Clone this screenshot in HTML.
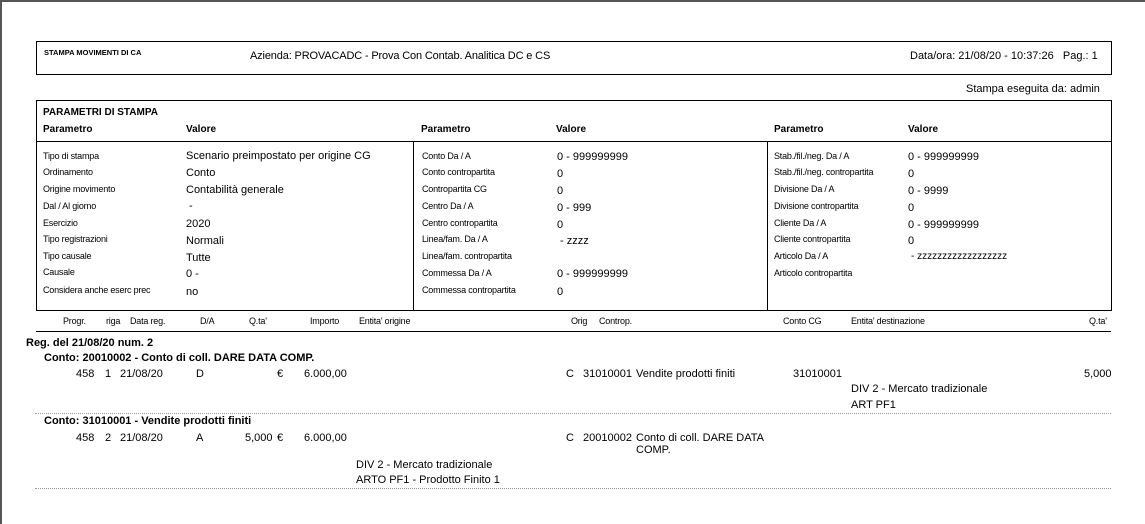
<!DOCTYPE html>
<html><head><meta charset="utf-8"><style>
html,body{margin:0;padding:0}
body{width:1145px;height:524px;position:relative;overflow:hidden;background:#fff;font-family:"Liberation Sans",sans-serif;color:#000;border-left:2px solid #555;border-top:2px solid #555;box-sizing:border-box}
div,span{position:absolute;white-space:nowrap}
.s{font-size:9px;letter-spacing:-0.2px}
.v{font-size:11px}
.b{font-weight:bold;font-size:10px}
.bx{border:1px solid #000}
.dot{border-top:1px dotted #999;height:0}
</style></head><body>
<div class="bx" style="left:34px;top:39px;width:1074px;height:32px"></div>
<span class="b" style="left:42px;top:46px;font-size:7.5px">STAMPA MOVIMENTI DI CA</span>
<span class="v" style="left:248px;top:48px;letter-spacing:-0.15px">Azienda: PROVACADC - Prova Con Contab. Analitica DC e CS</span>
<span class="v" style="left:908px;top:48px">Data/ora: 21/08/20 - 10:37:26&nbsp;&nbsp;&nbsp;Pag.: 1</span>
<span class="v" style="left:964px;top:81px">Stampa eseguita da: admin</span>

<div class="bx" style="left:34px;top:98px;width:1074px;height:209px"></div>
<div style="left:34px;top:139px;width:1075px;height:1px;background:#000"></div>
<div style="left:411px;top:139px;width:1px;height:169px;background:#000"></div>
<div style="left:765px;top:139px;width:1px;height:169px;background:#000"></div>
<span class="b" style="left:41px;top:105px">PARAMETRI DI STAMPA</span>
<span class="b" style="left:41px;top:122px">Parametro</span>
<span class="b" style="left:184px;top:122px">Valore</span>
<span class="b" style="left:419px;top:122px">Parametro</span>
<span class="b" style="left:554px;top:122px">Valore</span>
<span class="b" style="left:772px;top:122px">Parametro</span>
<span class="b" style="left:906px;top:122px">Valore</span>

<span class="s" style="left:41px;top:149px">Tipo di stampa</span><span class="v" style="left:184px;top:148px">Scenario preimpostato per origine CG</span>
<span class="s" style="left:41px;top:165px">Ordinamento</span><span class="v" style="left:184px;top:165px">Conto</span>
<span class="s" style="left:41px;top:182px">Origine movimento</span><span class="v" style="left:184px;top:182px">Contabilità generale</span>
<span class="s" style="left:41px;top:199px">Dal / Al giorno</span><span class="v" style="left:187px;top:198px">-</span>
<span class="s" style="left:41px;top:216px">Esercizio</span><span class="v" style="left:184px;top:216px">2020</span>
<span class="s" style="left:41px;top:232px">Tipo registrazioni</span><span class="v" style="left:184px;top:233px">Normali</span>
<span class="s" style="left:41px;top:249px">Tipo causale</span><span class="v" style="left:184px;top:250px">Tutte</span>
<span class="s" style="left:41px;top:265px">Causale</span><span class="v" style="left:184px;top:266px">0 -</span>
<span class="s" style="left:41px;top:283px">Considera anche eserc prec</span><span class="v" style="left:184px;top:284px">no</span>

<span class="s" style="left:420px;top:149px">Conto Da / A</span><span class="v" style="left:555px;top:149px">0 - 999999999</span>
<span class="s" style="left:420px;top:165px">Conto contropartita</span><span class="v" style="left:555px;top:166px">0</span>
<span class="s" style="left:420px;top:182px">Contropartita CG</span><span class="v" style="left:555px;top:183px">0</span>
<span class="s" style="left:420px;top:199px">Centro Da / A</span><span class="v" style="left:555px;top:200px">0 - 999</span>
<span class="s" style="left:420px;top:216px">Centro contropartita</span><span class="v" style="left:555px;top:217px">0</span>
<span class="s" style="left:420px;top:232px">Linea/fam. Da / A</span><span class="v" style="left:558px;top:233px">- zzzz</span>
<span class="s" style="left:420px;top:249px">Linea/fam. contropartita</span>
<span class="s" style="left:420px;top:266px">Commessa Da / A</span><span class="v" style="left:555px;top:266px">0 - 999999999</span>
<span class="s" style="left:420px;top:283px">Commessa contropartita</span><span class="v" style="left:555px;top:284px">0</span>

<span class="s" style="left:772px;top:149px">Stab./fil./neg. Da / A</span><span class="v" style="left:906px;top:149px">0 - 999999999</span>
<span class="s" style="left:772px;top:165px">Stab./fil./neg. contropartita</span><span class="v" style="left:906px;top:166px">0</span>
<span class="s" style="left:772px;top:182px">Divisione Da / A</span><span class="v" style="left:906px;top:183px">0 - 9999</span>
<span class="s" style="left:772px;top:199px">Divisione contropartita</span><span class="v" style="left:906px;top:200px">0</span>
<span class="s" style="left:772px;top:216px">Cliente Da / A</span><span class="v" style="left:906px;top:217px">0 - 999999999</span>
<span class="s" style="left:772px;top:232px">Cliente contropartita</span><span class="v" style="left:906px;top:233px">0</span>
<span class="s" style="left:772px;top:249px">Articolo Da / A</span><span class="v" style="left:909px;top:249px;font-size:10px">- zzzzzzzzzzzzzzzzzz</span>
<span class="s" style="left:772px;top:266px">Articolo contropartita</span>

<span class="s" style="left:61px;top:314px">Progr.</span>
<span class="s" style="left:104px;top:314px">riga</span>
<span class="s" style="left:128px;top:314px">Data reg.</span>
<span class="s" style="left:198px;top:314px">D/A</span>
<span class="s" style="left:247px;top:314px">Q.ta'</span>
<span class="s" style="left:308px;top:314px">Importo</span>
<span class="s" style="left:357px;top:314px">Entita' origine</span>
<span class="s" style="left:569px;top:314px">Orig</span>
<span class="s" style="left:597px;top:314px">Controp.</span>
<span class="s" style="left:781px;top:314px">Conto CG</span>
<span class="s" style="left:849px;top:314px">Entita' destinazione</span>
<span class="s" style="left:1087px;top:314px">Q.ta'</span>
<div style="left:34px;top:329px;width:1075px;height:1px;background:#000"></div>

<span class="b" style="left:24px;top:335px;font-size:11px">Reg. del 21/08/20 num. 2</span>
<span class="b" style="left:42px;top:350px;font-size:11px">Conto: 20010002 - Conto di coll. DARE DATA COMP.</span>
<span class="v" style="left:74px;top:366px">458</span><span class="v" style="left:103px;top:366px">1</span><span class="v" style="left:118px;top:366px">21/08/20</span><span class="v" style="left:194px;top:366px">D</span><span class="v" style="left:275px;top:366px">€</span><span class="v" style="left:302px;top:366px">6.000,00</span>
<span class="v" style="left:564px;top:366px">C</span><span class="v" style="left:581px;top:366px">31010001</span><span class="v" style="left:634px;top:366px">Vendite prodotti finiti</span><span class="v" style="left:791px;top:366px">31010001</span><span class="v" style="left:1082px;top:366px">5,000</span>
<span class="v" style="left:849px;top:381px">DIV 2 - Mercato tradizionale</span>
<span class="v" style="left:849px;top:397px">ART PF1</span>
<div class="dot" style="left:33px;top:411px;width:1076px"></div>
<span class="b" style="left:42px;top:413px;font-size:11px">Conto: 31010001 - Vendite prodotti finiti</span>
<span class="v" style="left:74px;top:430px">458</span><span class="v" style="left:103px;top:430px">2</span><span class="v" style="left:118px;top:430px">21/08/20</span><span class="v" style="left:194px;top:430px">A</span><span class="v" style="left:243px;top:430px">5,000</span><span class="v" style="left:275px;top:430px">€</span><span class="v" style="left:302px;top:430px">6.000,00</span>
<span class="v" style="left:564px;top:430px">C</span><span class="v" style="left:581px;top:430px">20010002</span><span class="v" style="left:634px;top:430px">Conto di coll. DARE DATA</span>
<span class="v" style="left:634px;top:442px">COMP.</span>
<span class="v" style="left:354px;top:457px">DIV 2 - Mercato tradizionale</span>
<span class="v" style="left:354px;top:472px">ARTO PF1 - Prodotto Finito 1</span>
<div class="dot" style="left:33px;top:486px;width:1076px"></div>
</body></html>
